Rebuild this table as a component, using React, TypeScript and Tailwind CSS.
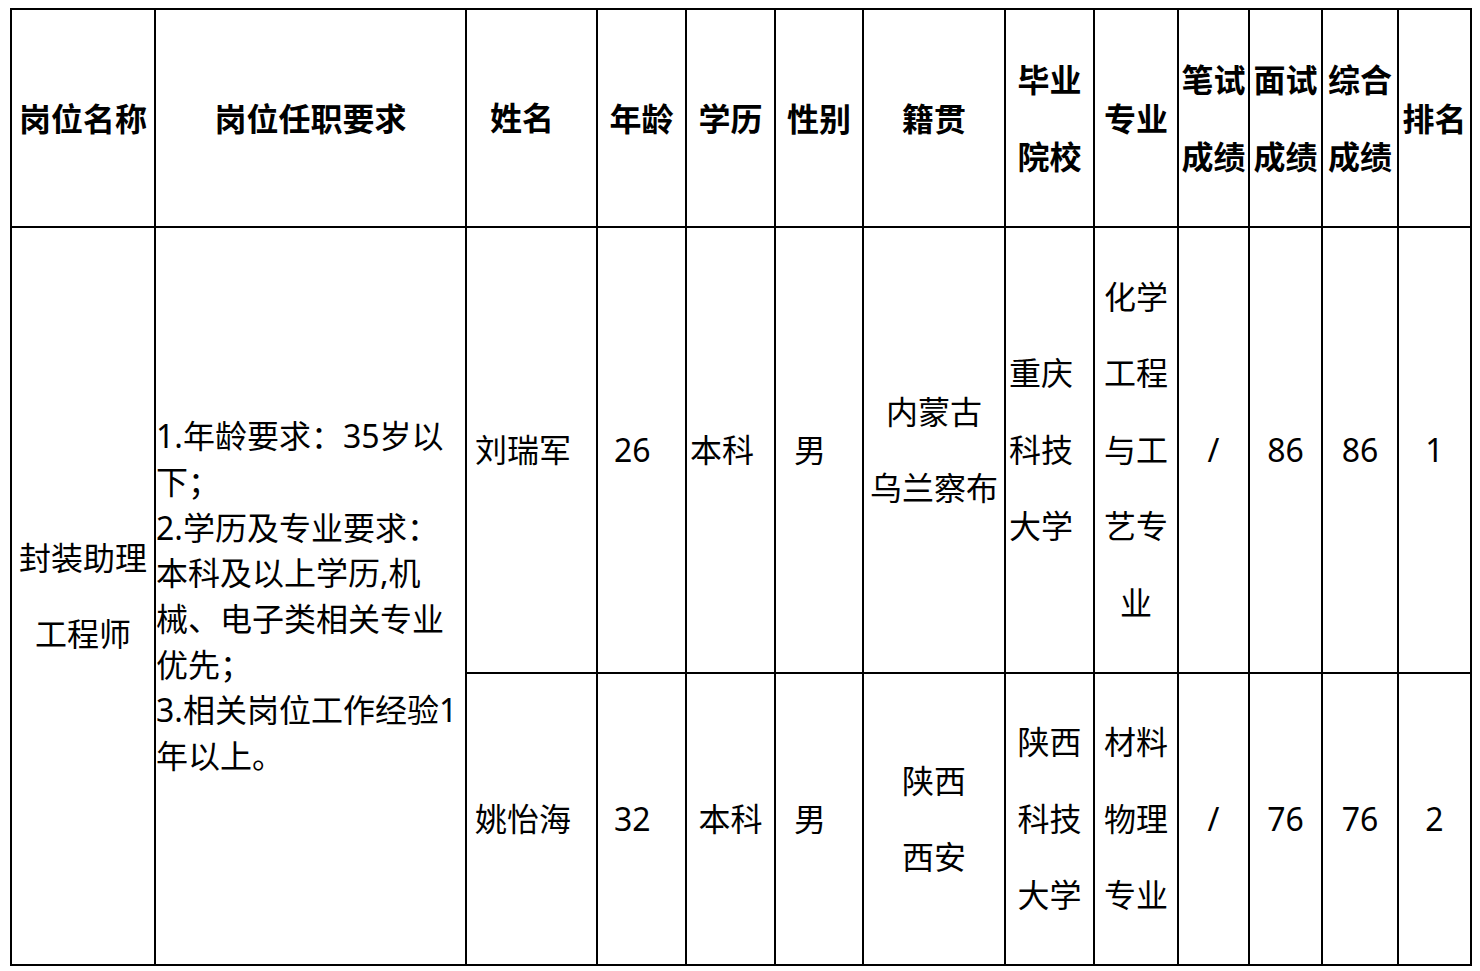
import React from 'react';

const cell = "border-r-2 border-b-2 border-black flex items-center whitespace-nowrap";
const head = `${cell} justify-center text-center font-bold leading-[77px]`;
const data = `${cell} leading-[76.5px]`;

const Lines: React.FC<{ lines: string[] }> = ({ lines }) => (
    <div>
        {lines.map((l, i) => (
            <div key={i}>{l}</div>
        ))}
    </div>
);

const requirements = [
    '1.年龄要求：35岁以',
    '下；',
    '2.学历及专业要求：',
    '本科及以上学历,机',
    '械、电子类相关专业',
    '优先；',
    '3.相关岗位工作经验1',
    '年以上。',
];

const App: React.FC = () => {
    return (
        <div className="min-h-screen bg-white pt-[8px] pl-[10px] text-black text-[32px] font-[family-name:'Noto_Sans','Noto_Sans_CJK_SC',sans-serif]">
            <div className="grid w-max grid-cols-[144px_311px_131px_89px_89px_88px_142px_89px_84px_71px_73px_76px_73px] grid-rows-[218px_446px_292px] border-l-2 border-t-2 border-black">
                {/* header */}
                <div className={head}>岗位名称</div>
                <div className={head}>岗位任职要求</div>
                <div className={`${cell} font-bold pl-[23px]`}>姓名</div>
                <div className={head}>年龄</div>
                <div className={head}>学历</div>
                <div className={head}>性别</div>
                <div className={head}>籍贯</div>
                <div className={head}><Lines lines={['毕业', '院校']} /></div>
                <div className={head}>专业</div>
                <div className={head}><Lines lines={['笔试', '成绩']} /></div>
                <div className={head}><Lines lines={['面试', '成绩']} /></div>
                <div className={head}><Lines lines={['综合', '成绩']} /></div>
                <div className={head}>排名</div>

                {/* merged cells */}
                <div className={`${data} row-span-2 justify-center text-center`}>
                    <Lines lines={['封装助理', '工程师']} />
                </div>
                <div className={`${cell} row-span-2 leading-[45.7px]`}>
                    <Lines lines={requirements} />
                </div>

                {/* row 1 */}
                <div className={`${data} pl-[8px]`}>刘瑞军</div>
                <div className={`${data} pl-[16px]`}>26</div>
                <div className={`${data} pl-[3px]`}>本科</div>
                <div className={`${data} pl-[18px]`}>男</div>
                <div className={`${data} justify-center text-center`}>
                    <Lines lines={['内蒙古', '乌兰察布']} />
                </div>
                <div className={`${data} pl-[3px]`}>
                    <Lines lines={['重庆', '科技', '大学']} />
                </div>
                <div className={`${data} justify-center text-center`}>
                    <Lines lines={['化学', '工程', '与工', '艺专', '业']} />
                </div>
                <div className={`${data} justify-center`}>/</div>
                <div className={`${data} justify-center`}>86</div>
                <div className={`${data} justify-center`}>86</div>
                <div className={`${data} justify-center`}>1</div>

                {/* row 2 */}
                <div className={`${data} pl-[8px]`}>姚怡海</div>
                <div className={`${data} pl-[16px]`}>32</div>
                <div className={`${data} justify-center`}>本科</div>
                <div className={`${data} pl-[18px]`}>男</div>
                <div className={`${data} justify-center text-center`}>
                    <Lines lines={['陕西', '西安']} />
                </div>
                <div className={`${data} justify-center text-center`}>
                    <Lines lines={['陕西', '科技', '大学']} />
                </div>
                <div className={`${data} justify-center text-center`}>
                    <Lines lines={['材料', '物理', '专业']} />
                </div>
                <div className={`${data} justify-center`}>/</div>
                <div className={`${data} justify-center`}>76</div>
                <div className={`${data} justify-center`}>76</div>
                <div className={`${data} justify-center`}>2</div>
            </div>
        </div>
    );
};

export default App;
